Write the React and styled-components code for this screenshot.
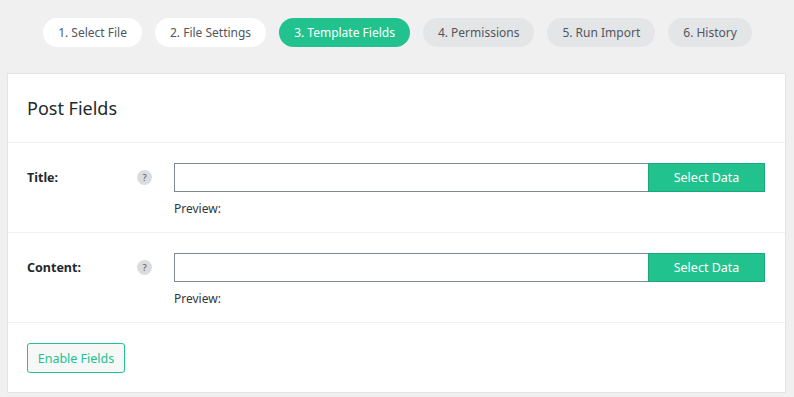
import React from 'react'
import styled, { createGlobalStyle } from 'styled-components'

const GlobalStyle = createGlobalStyle`
  body {
    margin: 0;
    background: #f0f0f1;
    font-family: "Noto Sans", "Open Sans", sans-serif;
    color: #23282d;
  }
`

const Page = styled.div`
  padding: 18px 8px 4px 7px;
`

const Steps = styled.div`
  display: flex;
  justify-content: center;
  gap: 13px;
  padding-left: 2px;
`

const Step = styled.div`
  height: 29px;
  padding: 0 15px;
  border-radius: 15px;
  display: flex;
  align-items: center;
  font-size: 12px;
  background: ${p => (p.active ? '#21c28e' : p.done ? '#fff' : '#e4e5e7')};
  color: ${p => (p.active ? '#fff' : '#50575e')};
`

const Card = styled.div`
  margin-top: 26px;
  background: #fff;
  border: 1px solid #e2e4e7;
`

const CardHeader = styled.div`
  height: 68px;
  padding: 0 19px;
  display: flex;
  align-items: center;
  border-bottom: 1px solid #f0f0f1;
  font-size: 18px;
  color: #23282d;
`

const Row = styled.div`
  display: grid;
  grid-template-columns: 110px 37px 1fr;
  padding: 20px 20px 15px 19px;
  border-bottom: 1px solid #f0f0f1;
`

const Label = styled.div`
  height: 29px;
  display: flex;
  align-items: center;
  font-weight: 700;
  font-size: 12.5px;
`

const HelpCell = styled.div`
  height: 29px;
  display: flex;
  align-items: center;
`

const Help = styled.span`
  width: 15px;
  height: 15px;
  border-radius: 50%;
  background: #dcdcde;
  color: #50575e;
  font-size: 9.5px;
  display: flex;
  align-items: center;
  justify-content: center;
`

const Field = styled.div`
  display: flex;
  flex-direction: column;
`

const InputGroup = styled.div`
  display: flex;
  height: 29px;
`

const Input = styled.input`
  flex: 1;
  box-sizing: border-box;
  height: 29px;
  margin: 0;
  border: 1px solid #7e8993;
  border-right: none;
  outline: none;
  padding: 0 8px;
  font: inherit;
`

const SelectButton = styled.button`
  width: 117px;
  height: 29px;
  box-sizing: border-box;
  margin: 0;
  border: 1px solid #1ba878;
  background: #21c28e;
  color: #fff;
  font-family: inherit;
  font-size: 12.5px;
  padding: 0;
`

const Preview = styled.div`
  margin-top: 8px;
  font-size: 12px;
  color: #32373c;
`

const Footer = styled.div`
  padding: 20px 19px 19px 19px;
`

const EnableButton = styled.button`
  height: 30px;
  width: 98px;
  box-sizing: border-box;
  border: 1px solid #21c28e;
  border-radius: 3px;
  background: #f6f7f7;
  color: #21c28e;
  font-family: inherit;
  font-size: 12.5px;
  padding: 0;
`

const steps = [
  { label: '1. Select File', done: true },
  { label: '2. File Settings', done: true },
  { label: '3. Template Fields', active: true },
  { label: '4. Permissions' },
  { label: '5. Run Import' },
  { label: '6. History' },
]

const fields = ['Title:', 'Content:']

const App = () => (
  <>
    <GlobalStyle />
    <Page>
      <Steps>
        {steps.map(s => (
          <Step key={s.label} active={s.active} done={s.done}>
            {s.label}
          </Step>
        ))}
      </Steps>
      <Card>
        <CardHeader>Post Fields</CardHeader>
        {fields.map(f => (
          <Row key={f}>
            <Label>{f}</Label>
            <HelpCell>
              <Help>?</Help>
            </HelpCell>
            <Field>
              <InputGroup>
                <Input type="text" />
                <SelectButton>Select Data</SelectButton>
              </InputGroup>
              <Preview>Preview:</Preview>
            </Field>
          </Row>
        ))}
        <Footer>
          <EnableButton>Enable Fields</EnableButton>
        </Footer>
      </Card>
    </Page>
  </>
)

export default App
